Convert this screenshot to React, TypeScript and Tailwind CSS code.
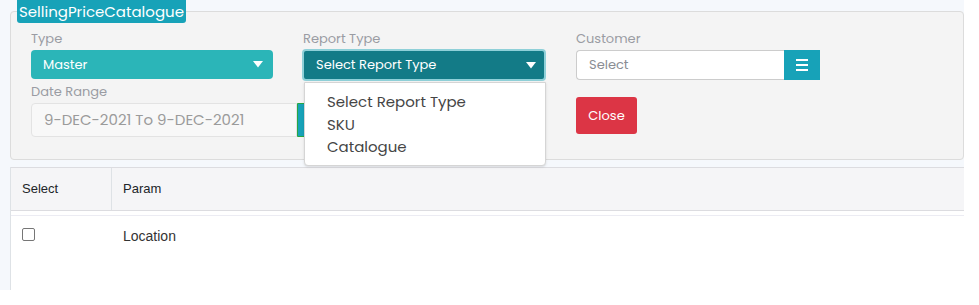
const Caret = () => (
  <svg width="10" height="7" viewBox="0 0 10 7" className="fill-white">
    <path d="M0 0h10L5 6.5z" />
  </svg>
);

const Label = ({ children }: { children: React.ReactNode }) => (
  <div className="text-[13px] leading-[17px] text-[#9a9ca3] mb-[3px]">{children}</div>
);

export default function App() {
  return (
    <div className="flex w-full h-[305px] bg-white font-['Poppins','Inter',sans-serif]">
      <div className="w-[964px] h-[290px] bg-[#f5f8fc] flex flex-col">
        <fieldset className="ml-[10px] h-[160px] border border-[#dcdcdc] rounded-[4px] bg-[#f4f4f4] px-[6px]">
          <legend className="bg-[#17a2b8] text-white text-[15px] leading-[23px] px-[2px] rounded-b-[3px]">
            SellingPriceCatalogue
          </legend>
          <div className="relative grid grid-cols-[272px_273px_260px] pl-[14px] pt-[7px]">
            <div>
              <Label>Type</Label>
              <div className="w-[242px] h-[29px] rounded-[4px] bg-[#2bb5b8] flex items-center justify-between pl-[12px] pr-[10px] text-white text-[13px]">
                <span>Master</span>
                <Caret />
              </div>
            </div>
            <div>
              <Label>Report Type</Label>
              <div className="w-[244px] h-[32px] -mt-[1px] -ml-[1px] rounded-[4px] bg-[#137b87] border-[2px] border-[#8fd0d8] flex items-center justify-between pl-[12px] pr-[8px] text-white text-[13px]">
                <span>Select Report Type</span>
                <Caret />
              </div>
            </div>
            <div>
              <Label>Customer</Label>
              <div className="flex h-[30px]">
                <div className="w-[208px] bg-white border border-[#cccccc] border-r-0 rounded-l-[4px] flex items-center pl-[12px] text-[13px] text-[#8a8d93]">
                  Select
                </div>
                <div className="w-[36px] bg-[#17a2b8] flex flex-col items-center justify-center gap-[3px]">
                  <span className="w-[12px] h-[2px] bg-white" />
                  <span className="w-[12px] h-[2px] bg-white" />
                  <span className="w-[12px] h-[2px] bg-white" />
                </div>
              </div>
            </div>

            <div className="col-span-2 mt-[2px]">
              <Label>Date Range</Label>
              <div className="flex h-[34px]">
                <div className="w-[266px] bg-[#f8f8f8] border border-[#e3e3e3] rounded-l-[4px] flex items-center pl-[12px] text-[15px] text-[#9b9b9b]">
                  9-DEC-2021 To 9-DEC-2021
                </div>
                <div className="w-[34px] bg-[#17a2b8] border border-[#28a745] rounded-r-[4px]" />
              </div>
            </div>
            <div className="pt-[16px]">
              <button className="h-[37px] w-[61px] rounded-[3px] bg-[#dc3545] text-white text-[13px]">Close</button>
            </div>

            <div className="absolute left-[287px] top-[59px] w-[242px] h-[84px] bg-white border border-[#d5d5d5] rounded-b-[4px] pt-[8px] pl-[22px] text-[15px] leading-[22.5px] text-[#454545] shadow-sm">
              <div>Select Report Type</div>
              <div>SKU</div>
              <div>Catalogue</div>
            </div>
          </div>
        </fieldset>

        <div className="ml-[10px] mt-[7px] flex-1 bg-white border-l border-[#dee2e6] font-['Liberation_Sans',Arial,sans-serif] text-[#212529]">
          <div className="flex h-[44px] bg-[#f5f5f7] border-y border-[#dcdce0] text-[13px]">
            <div className="w-[101px] border-r border-[#dee2e6] flex items-center pl-[11px]">Select</div>
            <div className="flex items-center pl-[11px]">Param</div>
          </div>
          <div className="h-[5px] border-b border-[#ececf3]" />
          <div className="flex pt-[11px] text-[14px] text-[#333]">
            <div className="w-[101px] pl-[11px] pt-[1px]">
              <span className="block w-[13px] h-[13px] border border-[#767676] rounded-[2px] bg-white" />
            </div>
            <div className="pl-[11px] pt-[1px] leading-[16px]">Location</div>
          </div>
        </div>
      </div>
    </div>
  );
}
